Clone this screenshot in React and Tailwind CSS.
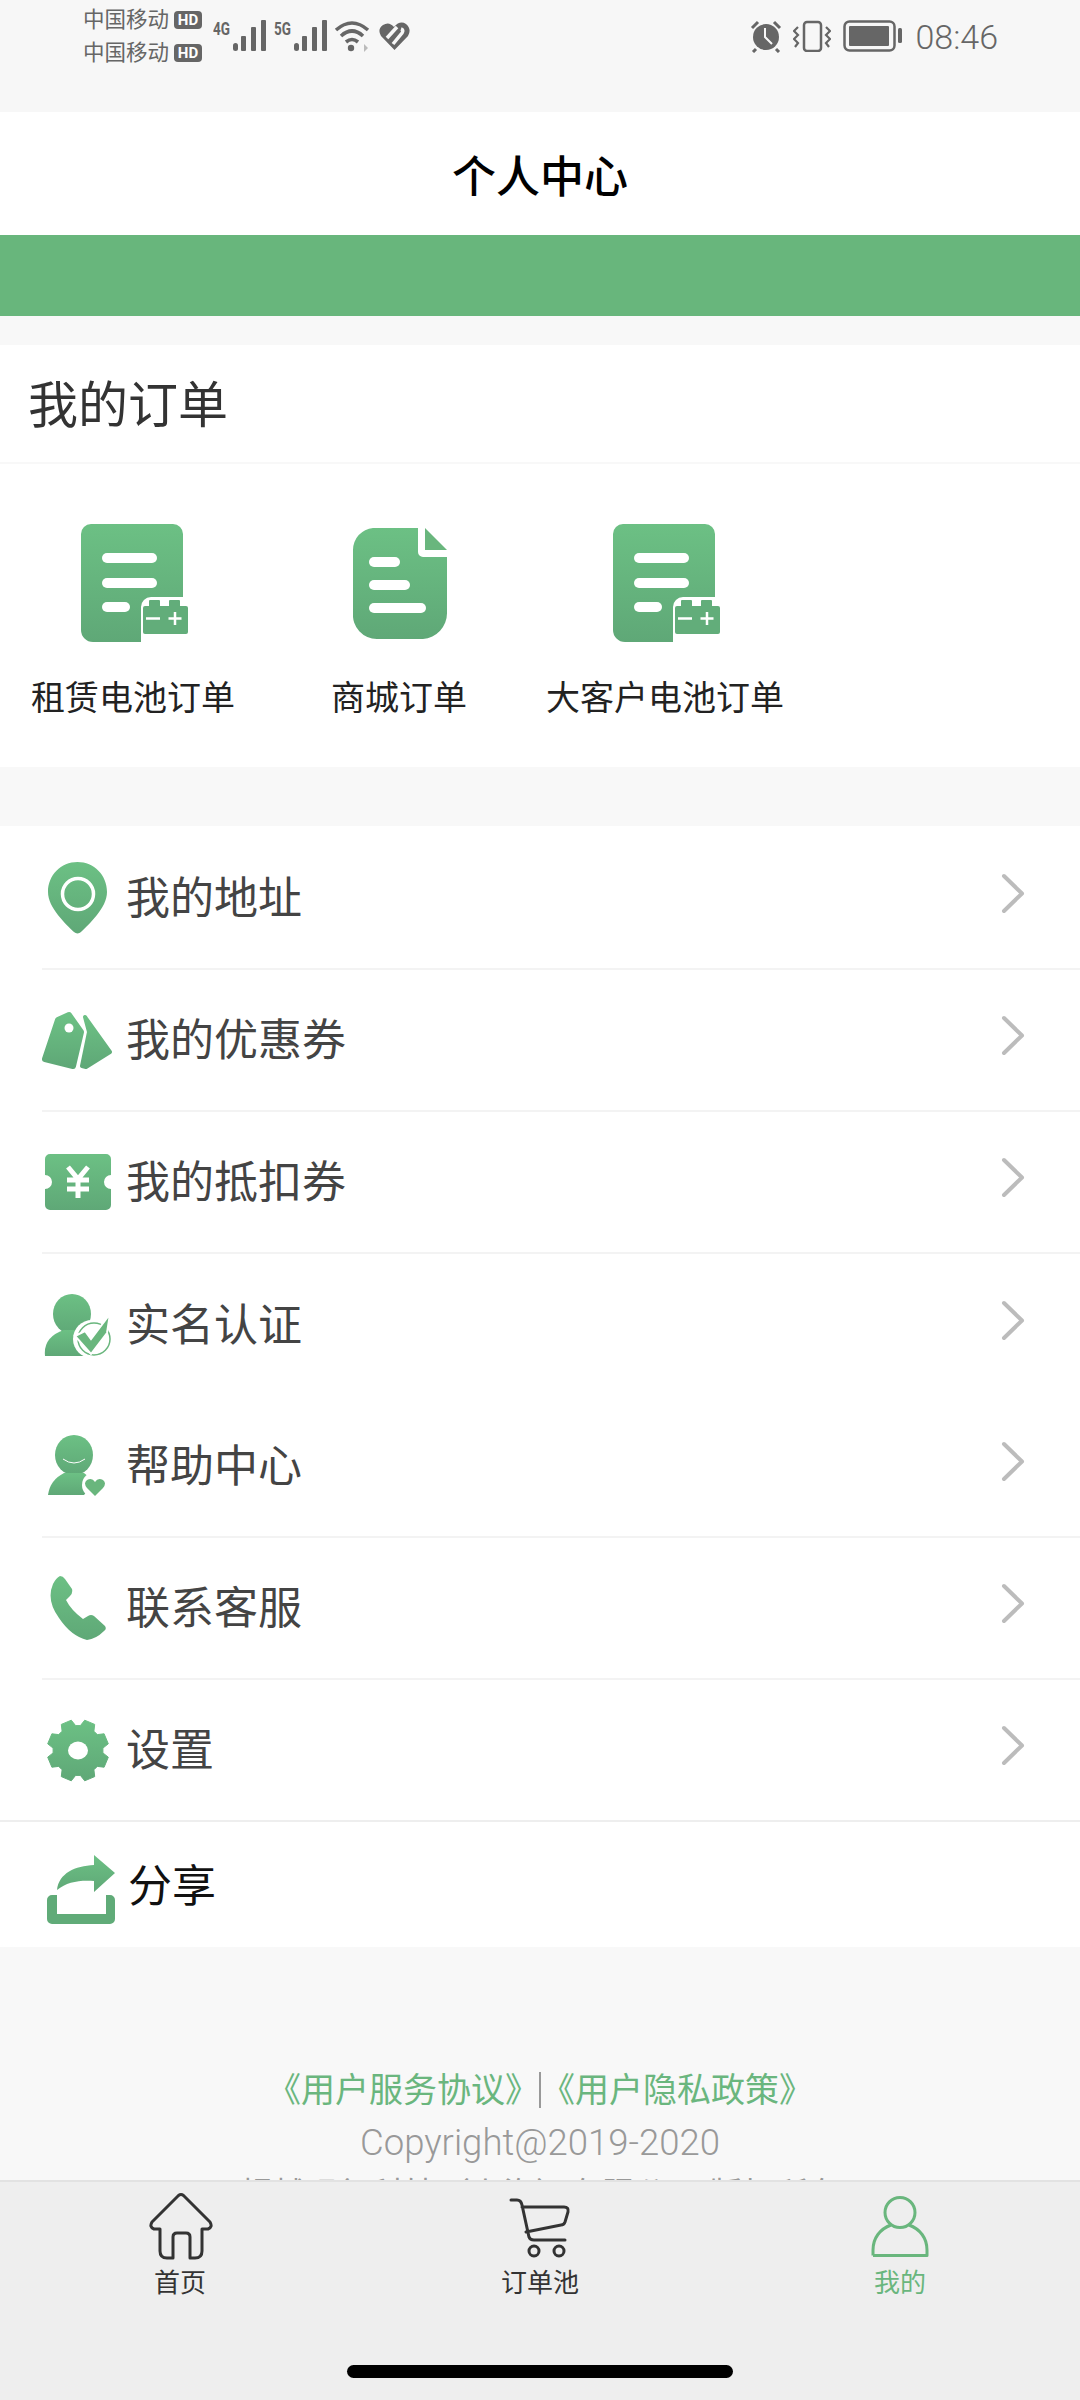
import React from 'react';

const GREEN = '#69b67d';

const Grad = ({ id }) => (
  <defs>
    <linearGradient id={id} x1="0" y1="0" x2="0" y2="1">
      <stop offset="0%" stopColor="#6cc084" />
      <stop offset="100%" stopColor="#5fa877" />
    </linearGradient>
  </defs>
);

// gear outline, 8 teeth
const gearPath = () => {
  const cx = 31;
  const cy = 31.5;
  let d = '';
  for (let i = 0; i < 8; i++) {
    const c = 22.5 + i * 45;
    const pts = [
      [c - 17, 25],
      [c - 10, 31],
      [c + 10, 31],
      [c + 17, 25],
    ];
    pts.forEach(([a, r], j) => {
      const rad = (a * Math.PI) / 180;
      const x = (cx + r * Math.sin(rad)).toFixed(1);
      const y = (cy - r * Math.cos(rad)).toFixed(1);
      d += `${i === 0 && j === 0 ? 'M' : 'L'}${x} ${y} `;
    });
  }
  return d + 'Z';
};

const BatteryDoc = ({ id }) => (
  <svg width="110" height="120" viewBox="0 0 110 120">
    <Grad id={id} />
    <path
      d="M10 0H92a10 10 0 0 1 10 10V73H70a10 10 0 0 0-10 10V118H12a12 12 0 0 1-12-12V10A10 10 0 0 1 10 0Z"
      fill={`url(#${id})`}
    />
    <rect x="21" y="29" width="55" height="10" rx="5" fill="#fff" />
    <rect x="21" y="54" width="55" height="10" rx="5" fill="#fff" />
    <rect x="21" y="78" width="28" height="10" rx="5" fill="#fff" />
    <rect x="62" y="82" width="45" height="28" rx="2" fill="#62ad7a" />
    <rect x="68" y="76" width="11" height="7" rx="1" fill="#62ad7a" />
    <rect x="88" y="76" width="11" height="7" rx="1" fill="#62ad7a" />
    <path d="M65 94.5H79M87.5 94.5H100.5M94 88V101" stroke="#fff" strokeWidth="2.5" />
  </svg>
);

const MallDoc = () => (
  <svg width="94" height="111" viewBox="0 0 94 111">
    <Grad id="gMall" />
    <path
      d="M20 0H65V24a5 5 0 0 0 5 5H94V85a26 26 0 0 1-24 26H24A24 24 0 0 1 0 85V22A22 22 0 0 1 20 0Z"
      fill="url(#gMall)"
    />
    <path d="M72 0L94 22H72Z" fill="#69b67d" />
    <rect x="16" y="29" width="31" height="10" rx="5" fill="#fff" />
    <rect x="16" y="52" width="41" height="10" rx="5" fill="#fff" />
    <rect x="16" y="75" width="57" height="10" rx="5" fill="#fff" />
  </svg>
);

const PinIcon = () => (
  <svg width="59" height="72" viewBox="0 0 59 72">
    <Grad id="gPin" />
    <path
      d="M29.5 0C13 0 0 13 0 30C0 46 18 62 26 70a5 5 0 0 0 7 0C41 62 59 46 59 30C59 13 46 0 29.5 0Z"
      fill="url(#gPin)"
    />
    <circle cx="30" cy="32" r="15.5" fill="none" stroke="#fff" strokeWidth="3.5" />
  </svg>
);

const TagIcon = () => (
  <svg width="71" height="59" viewBox="0 0 71 59">
    <Grad id="gTag" />
    <path
      d="M16 9L27 4L39 21L31 55L3 48Z"
      fill="url(#gTag)"
      stroke="url(#gTag)"
      strokeWidth="6"
      strokeLinejoin="round"
    />
    <path
      d="M43 6L68 41L44 56L40 55L47 21Z"
      fill="url(#gTag)"
      stroke="url(#gTag)"
      strokeWidth="4"
      strokeLinejoin="round"
    />
    <circle cx="27" cy="17" r="4.5" fill="#fff" />
  </svg>
);

const TicketIcon = () => (
  <svg width="66" height="56" viewBox="0 0 66 56">
    <Grad id="gTicket" />
    <path
      d="M5 0H61a5 5 0 0 1 5 5V21a7 7 0 0 0 0 14V51a5 5 0 0 1-5 5H5a5 5 0 0 1-5-5V35a7 7 0 0 0 0-14V5A5 5 0 0 1 5 0Z"
      fill="url(#gTicket)"
    />
    <path d="M23 13L33 25L43 13M33 25V44M22 26H44M22 35H44" fill="none" stroke="#fff" strokeWidth="5" />
  </svg>
);

const VerifyIcon = () => (
  <svg width="67" height="62" viewBox="0 0 67 62">
    <Grad id="gVerify" />
    <ellipse cx="28" cy="20" rx="19" ry="20" fill="url(#gVerify)" />
    <path d="M1 62Q-1 43 20 36H38Q46 38 52 44V62Z" fill="url(#gVerify)" />
    <circle cx="48" cy="45" r="19" fill="#fff" />
    <circle cx="50" cy="45" r="16" fill="none" stroke={GREEN} strokeWidth="1.5" />
    <path d="M31 42L41 37L47 45L66 20L63 39L47 60Z" fill={GREEN} stroke="#fff" strokeWidth="2" />
  </svg>
);

const HelpIcon = () => (
  <svg width="59" height="62" viewBox="0 0 59 62">
    <Grad id="gHelp" />
    <ellipse cx="26" cy="20" rx="19" ry="20" fill="url(#gHelp)" />
    <path d="M0 60Q2 45 16 38H36Q42 42 46 48L36 60Z" fill="url(#gHelp)" />
    <path d="M15 24Q26 32 37 24" fill="none" stroke="#fff" strokeWidth="1" />
    <circle cx="47" cy="50" r="13" fill="#fff" />
    <path
      d="M47 61L39 53Q35 48 39 45Q44 42 47 47Q50 42 55 45Q59 48 55 53Z"
      fill={GREEN}
    />
  </svg>
);

const PhoneIcon = () => (
  <svg width="57" height="64" viewBox="0 0 57 64">
    <Grad id="gPhone" />
    <path
      d="M4 8Q7 2 11 0Q14 0 16 3L23 13Q24 17 21 20L17 24Q22 34 34 43L39 40Q42 38 45 40L56 50Q58 53 55 55Q47 63 38 64Q22 60 10 42Q-3 24 4 8Z"
      fill="url(#gPhone)"
    />
  </svg>
);

const GearIcon = () => (
  <svg width="62" height="63" viewBox="0 0 62 63">
    <Grad id="gGear" />
    <path d={gearPath()} fill="url(#gGear)" stroke="url(#gGear)" strokeWidth="1" strokeLinejoin="round" />
    <ellipse cx="31" cy="31.5" rx="10" ry="9" fill="#fff" />
  </svg>
);

const ShareIcon = () => (
  <svg width="68" height="69" viewBox="0 0 68 69">
    <Grad id="gShare" />
    <path d="M10 35C12 18 28 11 47 10V0L68 18L47 37V26C32 25 20 27 10 35Z" fill="url(#gShare)" />
    <path
      d="M5 40H10V59H59V40H63a5 5 0 0 1 5 5V64a5 5 0 0 1-5 5H5a5 5 0 0 1-5-5V45a5 5 0 0 1 5-5Z"
      fill="#60ab78"
    />
  </svg>
);

const Chevron = () => (
  <svg width="24" height="41" viewBox="0 0 24 41" className="mb-[9px]">
    <path d="M3 3L21 20.5L3 38" fill="none" stroke="#bcbcbc" strokeWidth="4" strokeLinecap="round" strokeLinejoin="round" />
  </svg>
);

const Carrier = () => (
  <div className="flex items-center h-[20px]">
    <span className="text-[21.5px] leading-[20px] text-[#666] w-[91px] whitespace-nowrap">中国移动</span>
    <span className="flex items-center justify-center w-[28px] h-[18px] rounded-[4px] bg-[#666] text-white text-[15px] leading-none font-bold">
      HD
    </span>
  </div>
);

const Signal = ({ label, offset }) => (
  <div className="flex items-start">
    <span className="mt-[11px] text-[18px] leading-[16px] font-bold text-[#666] scale-x-75 w-[20px] origin-left">
      {label}
    </span>
    <svg width="34" height="42" viewBox="0 0 34 42">
      <rect x="0" y="33" width="5" height="8" rx="2.5" fill="#666" />
      <rect x={offset} y="26" width="5" height="15" rx="1" fill="#666" />
      <rect x={offset + 10} y="17" width="5" height="24" rx="1" fill="#666" />
      <rect x={offset + 20} y="10" width="5" height="31" rx="1" fill="#666" />
    </svg>
  </div>
);

const StatusBar = () => (
  <div className="h-[112px] shrink-0 bg-[#f7f7f7] flex justify-between pl-[83px] pr-[82px]">
    <div className="flex items-start pt-[10px]">
      <div className="flex flex-col gap-[13px] w-[130px]">
        <Carrier />
        <Carrier />
      </div>
      <Signal label="4G" offset={8} />
      <div className="ml-[7px]">
        <Signal label="5G" offset={8} />
      </div>
      <svg width="36" height="34" viewBox="0 0 36 34" className="mt-[9px] ml-[6px]">
        <path d="M2 11Q18-3 34 11" fill="none" stroke="#666" strokeWidth="3.6" />
        <path d="M7 17Q18 7 29 17" fill="none" stroke="#666" strokeWidth="3.6" />
        <path d="M12 23Q18 18 24 23" fill="none" stroke="#666" strokeWidth="3.6" />
        <circle cx="17" cy="29" r="3.2" fill="#666" />
        <path d="M30 25L34 29L30 33Z" fill="#bbb" />
      </svg>
      <svg width="31" height="30" viewBox="0 0 31 30" className="mt-[11px] ml-[9px]">
        <path d="M15.5 29L2 15Q-2 8 4 4Q10 0 15 6Q21-1 27 3Q33 8 29 15Z" fill="#666" />
        <path d="M8 17L18 6" fill="none" stroke="#f7f7f7" strokeWidth="3.5" />
        <path d="M14 23L23 12Q25 9 22 8" fill="none" stroke="#f7f7f7" strokeWidth="3.5" />
      </svg>
    </div>
    <div className="flex items-start pt-[20px]">
      <svg width="32" height="33" viewBox="0 0 32 33">
        <circle cx="16" cy="17" r="13" fill="#666" />
        <path d="M15 8V17L22 24" fill="none" stroke="#f7f7f7" strokeWidth="2" />
        <path d="M2 8L8 2M30 8L24 2M6 29L3 32M26 29L29 32" stroke="#666" strokeWidth="3" />
      </svg>
      <svg width="38" height="32" viewBox="0 0 38 32" className="ml-[11px]">
        <rect x="11" y="2" width="17" height="29" rx="3" fill="none" stroke="#666" strokeWidth="2.5" />
        <path d="M5 7L1 11L5 15L1 19L5 23L2 27M33 7L37 11L33 15L37 19L33 23L36 27" fill="none" stroke="#666" strokeWidth="2.2" />
      </svg>
      <svg width="59" height="32" viewBox="0 0 59 32" className="ml-[12px]">
        <rect x="1.5" y="1.5" width="50" height="29" rx="5" fill="none" stroke="#666" strokeWidth="2.5" />
        <rect x="6" y="6" width="40" height="20" rx="1" fill="#666" />
        <rect x="55" y="8" width="4" height="15" rx="1.5" fill="#666" />
      </svg>
      <span className="ml-[13px] mt-[-2px] text-[34px] leading-[38px] font-light text-[#666]">08:46</span>
    </div>
  </div>
);

const orders = [
  { label: '租赁电池订单', icon: <BatteryDoc id="gDocA" />, iconClass: 'ml-[6px] pt-[2px]' },
  { label: '商城订单', icon: <MallDoc />, iconClass: 'ml-[1px] pt-[6px] pb-[3px]' },
  { label: '大客户电池订单', icon: <BatteryDoc id="gDocB" />, iconClass: 'ml-[6px] pt-[2px]' },
];

const menu = [
  { label: '我的地址', icon: <PinIcon />, h: 'h-[142px]', line: true },
  { label: '我的优惠券', icon: <TagIcon />, h: 'h-[142px]', line: true },
  { label: '我的抵扣券', icon: <TicketIcon />, h: 'h-[142px]', line: true },
  { label: '实名认证', icon: <VerifyIcon />, h: 'h-[142px]', line: false },
  { label: '帮助中心', icon: <HelpIcon />, h: 'h-[142px]', line: true },
  { label: '联系客服', icon: <PhoneIcon />, h: 'h-[142px]', line: true },
  { label: '设置', icon: <GearIcon />, h: 'h-[140px]', line: false },
];

const MenuRow = ({ item }) => (
  <div className={`${item.h} ml-[42px] pr-[55px] flex items-center ${item.line ? 'border-b-2 border-[#f3f3f3]' : ''}`}>
    <div className="w-[71px] flex justify-center">{item.icon}</div>
    <span className="ml-[13px] mt-[2px] flex-1 text-[44px] leading-[60px] text-[#444]">{item.label}</span>
    <Chevron />
  </div>
);

const HomeTab = () => (
  <svg width="67" height="69" viewBox="-1 -1 67 69">
    <path
      d="M30.5 2.5Q33 .5 35.5 2.5L62 29Q65 34 60 36H54V58Q54 65 47 65H42V44Q42 40 38 40H29Q25 40 25 44V65H19Q12 65 12 58V36H6Q1 34 4 29Z"
      fill="none"
      stroke="#333"
      strokeWidth="3"
      strokeLinejoin="round"
    />
  </svg>
);

const CartTab = () => (
  <svg width="62" height="62" viewBox="0 0 62 62">
    <path
      d="M2 3H8Q12 3 13 8L20 40Q21 43 25 43H56M13 10H55Q60 10 59 15L56 25Q55 28 52 28L17 35"
      fill="none"
      stroke="#333"
      strokeWidth="3"
      strokeLinecap="round"
    />
    <circle cx="25" cy="54" r="5" fill="none" stroke="#333" strokeWidth="3" />
    <circle cx="50" cy="54" r="5" fill="none" stroke="#333" strokeWidth="3" />
  </svg>
);

const UserTab = () => (
  <svg width="58" height="62" viewBox="0 0 58 62">
    <ellipse cx="29" cy="16.5" rx="15" ry="15" fill="none" stroke={GREEN} strokeWidth="3" />
    <path
      d="M2 59.5V54C2 42 9 33 20 29M38 29C49 33 56 42 56 54V59.5H2"
      fill="none"
      stroke={GREEN}
      strokeWidth="3"
      strokeLinejoin="round"
    />
  </svg>
);

const tabs = [
  { label: '首页', icon: <HomeTab />, active: false, pad: 'pt-[10px]', h: 'h-[76px]' },
  { label: '订单池', icon: <CartTab />, active: false, pad: 'pt-[15px]', h: 'h-[71px]' },
  { label: '我的', icon: <UserTab />, active: true, pad: 'pt-[14px]', h: 'h-[72px]' },
];

export default function App() {
  return (
    <div className="w-[1080px] h-[2400px] flex flex-col overflow-hidden bg-[#f8f8f8] font-['Roboto','Noto_Sans_CJK_SC',sans-serif]">
      <StatusBar />

      <div className="h-[123px] shrink-0 bg-white flex items-center justify-center pt-[8px]">
        <h1 className="text-[44px] leading-[60px] font-medium text-black">个人中心</h1>
      </div>
      <div className="h-[81px] shrink-0 bg-[#68b67c]" />

      <div className="flex-1 min-h-0 overflow-hidden pt-[29px]">
        {/* 我的订单 */}
        <section className="bg-white">
          <div className="h-[119px] flex items-center pl-[28px] pt-[4px] border-b-2 border-[#f8f8f8]">
            <h2 className="text-[50px] leading-[64px] text-[#333]">我的订单</h2>
          </div>
          <div className="h-[303px] flex pt-[58px]">
            {orders.map((o) => (
              <div key={o.label} className="w-[266px] flex flex-col items-center">
                <div className={`h-[125px] flex items-start ${o.iconClass}`}>{o.icon}</div>
                <span className="mt-[28px] text-[34px] leading-[46px] text-[#222] whitespace-nowrap">{o.label}</span>
              </div>
            ))}
          </div>
        </section>

        <section className="mt-[59px] pt-[2px] bg-white">
          {menu.map((item) => (
            <MenuRow key={item.label} item={item} />
          ))}
          <div className="h-[127px] border-t-2 border-[#eeeeee] pl-[47px] flex items-center">
            <div className="mt-[10px]">
              <ShareIcon />
            </div>
            <span className="ml-[13px] mt-[4px] text-[44px] leading-[60px] text-[#111]">分享</span>
          </div>
        </section>

        <footer className="pt-[123px] flex flex-col items-center">
          <p className="flex items-center text-[34px] leading-[40px] text-[#6ab67e] whitespace-nowrap">
            《用户服务协议》
            <span className="w-[2px] h-[36px] bg-[#999]" />
            《用户隐私政策》
          </p>
          <p className="mt-[11px] text-[36.5px] leading-[44px] font-light text-[#999]">Copyright@2019-2020</p>
          <p className="mt-[8px] text-[33px] leading-[44px] text-[#999] whitespace-nowrap">
            超越现行科技（上海）有限公司 版权所有
          </p>
        </footer>
      </div>

      <nav className="h-[220px] shrink-0 bg-[#eeeeee] border-t-2 border-[#e2e2e2] flex flex-col">
        <div className="flex">
          {tabs.map((t) => (
            <div key={t.label} className={`w-[360px] flex flex-col items-center ${t.pad}`}>
              <div className={`${t.h} flex items-start`}>{t.icon}</div>
              <span className={`text-[26px] leading-[30px] ${t.active ? 'text-[#69b67d]' : 'text-[#333]'}`}>{t.label}</span>
            </div>
          ))}
        </div>
        <div className="mt-auto mb-[22px] self-center w-[386px] h-[13px] rounded-full bg-black" />
      </nav>
    </div>
  );
}
